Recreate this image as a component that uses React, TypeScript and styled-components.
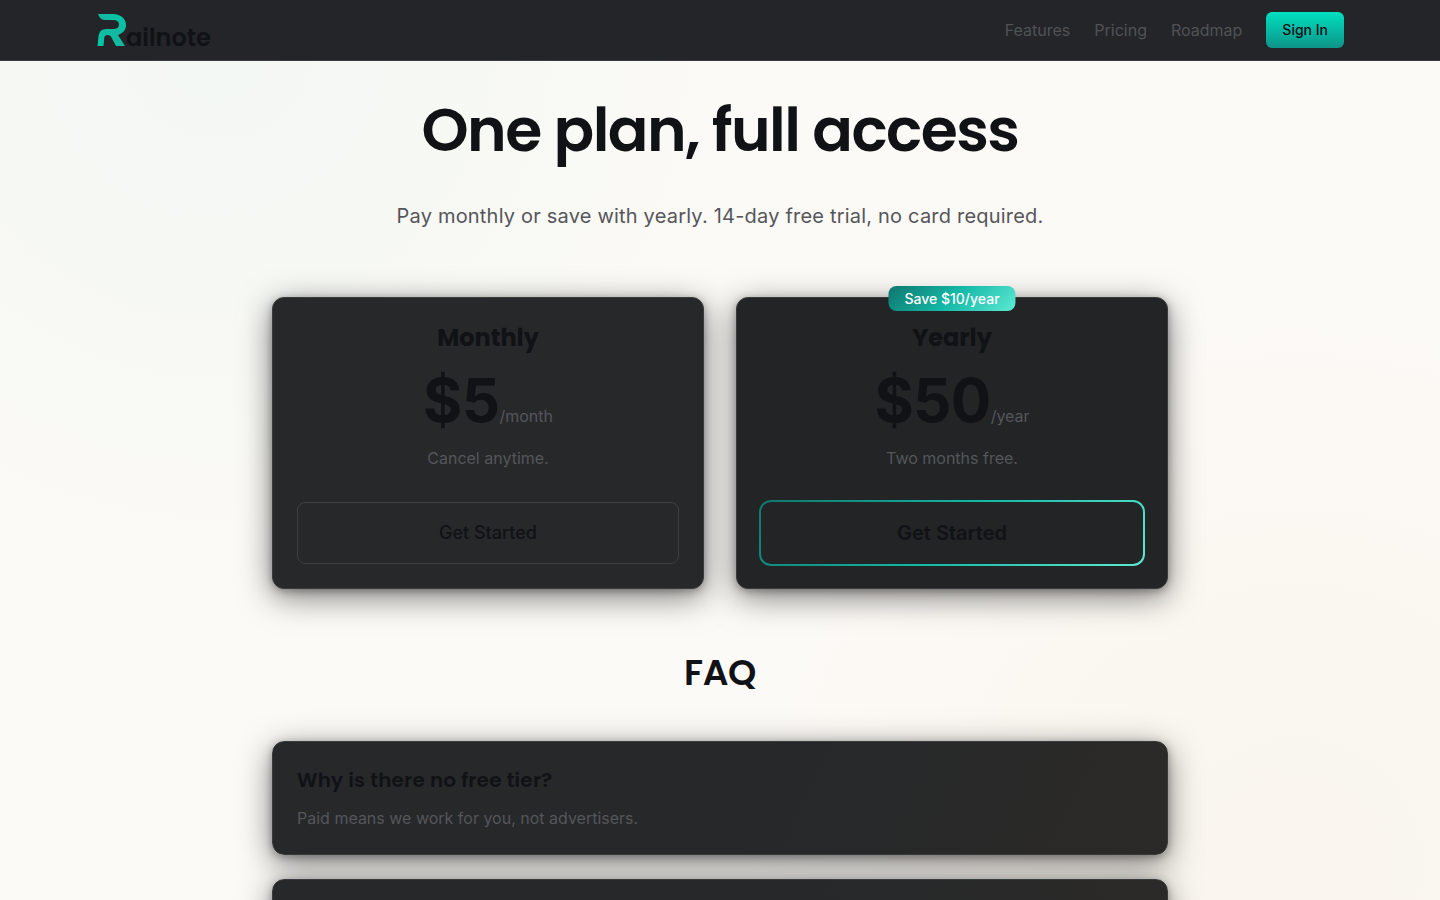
import React from "react";
import styled, { createGlobalStyle, css } from "styled-components";

const heading = `Poppins, Inter, "Liberation Sans", sans-serif`;

const GlobalStyle = createGlobalStyle`
  *, *::before, *::after { box-sizing: border-box; }
  body {
    margin: 0;
    min-height: 100vh;
    color: #101216;
    font-family: Inter, "Liberation Sans", sans-serif;
    font-size: 16px;
    line-height: 24px;
    background:
      radial-gradient(circle at 15% 5%, rgba(20, 184, 166, 0.04), transparent 560px),
      radial-gradient(circle at 90% 96%, rgba(200, 160, 80, 0.05), transparent 560px),
      #fcfaf6;
    background-attachment: fixed;
  }
  h1, h2, h3, p { margin: 0; }
`;

const Header = styled.header`
  background: #232528;
  border-bottom: 1px solid #3a3b3e;
`;

const Bar = styled.div`
  display: flex;
  align-items: center;
  justify-content: space-between;
  height: 60px;
  max-width: 1280px;
  margin: 0 auto;
  padding: 0 16px;
`;

const Brand = styled.a`
  display: flex;
  align-items: flex-end;
  color: #101216;
  font-family: ${heading};
  font-size: 24px;
  font-weight: 600;
  line-height: 16px;
  text-decoration: none;
`;

const Nav = styled.nav`
  display: flex;
  align-items: center;
  gap: 24px;
`;

const NavLink = styled.a`
  color: #505256;
  text-decoration: none;
`;

const SignIn = styled.button`
  height: 36px;
  padding: 0 16px;
  border: 0;
  border-radius: 6px;
  background: linear-gradient(180deg, #00e0c0, #0d9488);
  color: #0b0d10;
  font: 500 14px/20px Inter, sans-serif;
`;

const Main = styled.main`
  max-width: 928px;
  margin: 0 auto;
  padding: 36px 16px 48px;
`;

const Hero = styled.section`
  display: flex;
  flex-direction: column;
  align-items: center;
  gap: 36px;
  text-align: center;
`;

const Title = styled.h1`
  font-family: ${heading};
  font-size: 60px;
  font-weight: 600;
  line-height: 66px;
  letter-spacing: -0.025em;
`;

const Lead = styled.p`
  color: #55565a;
  font-size: 20px;
  line-height: 34px;
  letter-spacing: 0.01em;
`;

const cardSurface = css`
  border: 1px solid #3a3b3d;
  border-radius: 12px;
  box-shadow: 0 8px 32px rgba(0, 0, 0, 0.5), 0 2px 8px rgba(0, 0, 0, 0.3);
`;

const Plans = styled.section`
  display: grid;
  grid-template-columns: repeat(2, 1fr);
  gap: 32px;
  margin-top: 64px;
`;

const Plan = styled.article<{ $featured?: boolean }>`
  ${cardSurface}
  position: relative;
  display: flex;
  flex-direction: column;
  align-items: center;
  padding: 24px;
  text-align: center;
  background: ${(p) => (p.$featured ? "#222426" : "#26282a")};
`;

const Badge = styled.span`
  position: absolute;
  top: -12px;
  left: 50%;
  transform: translateX(-50%);
  padding: 2px 16px;
  border-radius: 8px;
  background: linear-gradient(135deg, #0f766e, #14b8a6 50%, #5eead4);
  color: #fff;
  font-size: 14px;
  font-weight: 500;
  line-height: 21px;
  white-space: nowrap;
`;

const PlanName = styled.h2`
  font-family: ${heading};
  font-size: 24px;
  font-weight: 700;
  line-height: 32px;
`;

const Price = styled.p`
  margin-top: 16px;
  font-size: 60px;
  font-weight: 700;
  line-height: 60px;
  letter-spacing: -0.01em;
`;

const Period = styled.span`
  color: #55565a;
  font-size: 16px;
  font-weight: 400;
  line-height: 24px;
  letter-spacing: 0;
`;

const Note = styled.p`
  margin-top: 16px;
  color: #55565a;
`;

const Start = styled.button<{ $featured?: boolean }>`
  width: 100%;
  height: 62px;
  margin-top: 32px;
  border: 1px solid #3d3f41;
  border-radius: 8px;
  background: transparent;
  color: #101216;
  font: 500 18px/28px Inter, sans-serif;
  ${(p) =>
    p.$featured &&
    css`
      width: calc(100% + 4px);
      height: 66px;
      margin: 30px -2px -2px;
      border: 2px solid transparent;
      border-radius: 12px;
      background:
        linear-gradient(#222426, #222426) padding-box,
        linear-gradient(135deg, #0f766e, #14b8a6 50%, #5eead4) border-box;
      font-size: 20px;
      font-weight: 600;
    `}
`;

const Faq = styled.section`
  display: flex;
  flex-direction: column;
  gap: 24px;
  margin-top: 64px;
`;

const FaqTitle = styled.h2`
  margin-bottom: 24px;
  font-family: ${heading};
  font-size: 36px;
  font-weight: 600;
  line-height: 40px;
  letter-spacing: -0.01em;
  text-align: center;
`;

const FaqCard = styled.article`
  ${cardSurface}
  min-height: 114px;
  padding: 24px;
  background: linear-gradient(115deg, #26282a 55%, #2c2a28);
`;

const Question = styled.h3`
  font-family: ${heading};
  font-size: 20px;
  font-weight: 600;
  line-height: 28px;
  letter-spacing: 0.01em;
`;

const Answer = styled.p`
  margin-top: 12px;
  color: #55565a;
`;

const LogoMark = () => (
  <svg width="30" height="32" viewBox="0 0 30 32" aria-hidden="true">
    <defs>
      <linearGradient id="mark" x1="0" y1="1" x2="1" y2="0">
        <stop offset="0" stopColor="#00c9a7" />
        <stop offset="0.5" stopColor="#14b8a0" />
        <stop offset="1" stopColor="#00c9a7" />
      </linearGradient>
    </defs>
    <path
      fill="url(#mark)"
      d="M2 0H17C25 0 30 5 30 11C30 16 27 19 22 21L29 32H20L15 22.500Q14 21 12 21H11.500Q8.500 21 8.200 24L7.500 32H1.500L2.500 22Q3.500 15 10 15H18Q23 14.500 23 10.500Q23 6 17 6H9Q4 6 2 0Z"
    />
  </svg>
);

const plans = [
  { name: "Monthly", price: "$5", period: "/month", note: "Cancel anytime." },
  { name: "Yearly", price: "$50", period: "/year", note: "Two months free.", badge: "Save $10/year" },
];

export default function App() {
  return (
    <>
      <GlobalStyle />
      <Header>
        <Bar>
          <Brand href="#"><LogoMark />ailnote</Brand>
          <Nav>
            <NavLink href="#features">Features</NavLink>
            <NavLink href="#pricing">Pricing</NavLink>
            <NavLink href="#roadmap">Roadmap</NavLink>
            <SignIn type="button">Sign In</SignIn>
          </Nav>
        </Bar>
      </Header>
      <Main>
        <Hero>
          <Title>One plan, full access</Title>
          <Lead>Pay monthly or save with yearly. 14-day free trial, no card required.</Lead>
        </Hero>
        <Plans>
          {plans.map((plan) => (
            <Plan key={plan.name} $featured={!!plan.badge}>
              {plan.badge && <Badge>{plan.badge}</Badge>}
              <PlanName>{plan.name}</PlanName>
              <Price>{plan.price}<Period>{plan.period}</Period></Price>
              <Note>{plan.note}</Note>
              <Start type="button" $featured={!!plan.badge}>Get Started</Start>
            </Plan>
          ))}
        </Plans>
        <Faq>
          <FaqTitle>FAQ</FaqTitle>
          <FaqCard>
            <Question>Why is there no free tier?</Question>
            <Answer>Paid means we work for you, not advertisers.</Answer>
          </FaqCard>
          <FaqCard />
        </Faq>
      </Main>
    </>
  );
}
